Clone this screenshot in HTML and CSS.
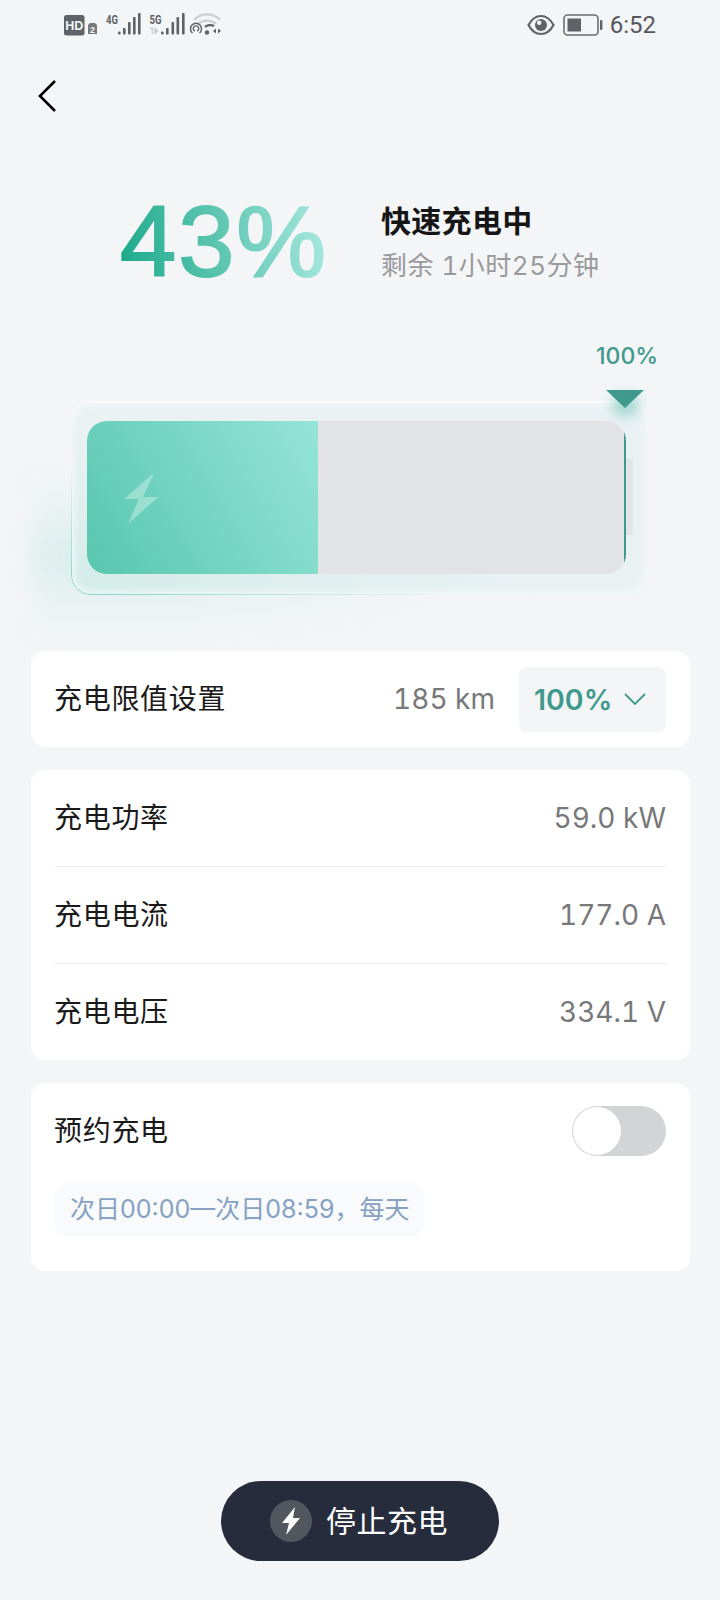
FILE: index.html
```html
<!DOCTYPE html>
<html lang="zh-CN">
<head>
<meta charset="utf-8">
<title>充电</title>
<link rel="stylesheet" href="styles.css">
</head>
<body>
<div class="page">
  <div class="status">
    <svg class="status-left" width="170" height="48" viewBox="60 0 170 48">
      <rect x="64" y="15" width="20.500" height="20.500" rx="2.500" fill="#5f6266"/>
      <text x="74.300" y="30" class="st-hd">HD</text>
      <path d="M90 23h5l2 2v9h-9v-9z" fill="#77797d"/>
      <text x="92.500" y="32.500" class="st-sim">2</text>
      <text x="106" y="23.500" class="st-g" textLength="12" lengthAdjust="spacingAndGlyphs">4G</text>
      <g fill="#5f6266">
        <rect x="118" y="31.500" width="2.600" height="3" rx="1"/>
        <rect x="123" y="28" width="2.600" height="6.500" rx=".8"/>
        <rect x="128" y="22" width="2.600" height="12.500" rx=".8"/>
        <rect x="133" y="17" width="2.600" height="17.500" rx=".8"/>
        <rect x="138" y="13" width="2.600" height="21.500" rx=".8"/>
      </g>
      <text x="149.500" y="23.500" class="st-g" textLength="12" lengthAdjust="spacingAndGlyphs">5G</text>
      <text x="149.500" y="34" class="st-one">1</text>
      <path d="M155 28l3 3-3 3zM155 28v6" fill="#c9cbce" stroke="#c9cbce"/>
      <g fill="#5f6266">
        <rect x="161" y="31.500" width="2.600" height="3" rx="1"/>
        <rect x="166" y="28" width="2.600" height="6.500" rx=".8"/>
        <rect x="171.500" y="22" width="2.600" height="12.500" rx=".8"/>
        <rect x="176.500" y="17" width="2.600" height="17.500" rx=".8"/>
        <rect x="182" y="13" width="2.600" height="21.500" rx=".8"/>
      </g>
      <path d="M194 20c7-7.500 19-7.500 26 0M198 24c5-4.500 13-4.500 18 0" fill="none" stroke="#cdcfd2" stroke-width="2.300"/>
      <path d="M192.500 33a5.500 5.500 0 1 1 7 0M194.800 31a2.700 2.700 0 1 1 2.400 0" fill="none" stroke="#5f6266" stroke-width="1.400"/>
      <path d="M205 27c2-2 6-2.500 9-1" fill="none" stroke="#5f6266" stroke-width="2.300"/>
      <circle cx="207" cy="32.500" r="2.200" fill="#5f6266"/>
      <path d="M213 31l3-2.500v5zM218 28.500l3 2.500-3 2.500z" fill="#5f6266"/>
    </svg>
    <div class="status-right">
      <svg width="28" height="22" viewBox="0 0 28 22" class="st-eye">
        <path d="M1.500 11C5 4.500 9 2 14 2s9 2.500 12.500 9C23 17.500 19 20 14 20S5 17.500 1.500 11z" fill="none" stroke="#5f6266" stroke-width="2.200"/>
        <circle cx="14" cy="11" r="6" fill="#5f6266"/>
        <circle cx="12.200" cy="8.800" r="2.300" fill="#f3f5f7"/>
      </svg>
      <svg width="40" height="22" viewBox="0 0 40 22" class="st-batt">
        <rect x="1" y="1" width="34" height="20" rx="3.500" fill="none" stroke="#6b6e72" stroke-width="1.600"/>
        <rect x="4.500" y="4.500" width="13.500" height="13" fill="#5f6266"/>
        <rect x="37" y="6" width="2.400" height="10" rx="1" fill="#5f6266"/>
      </svg>
      <span class="st-time">6:52</span>
    </div>
  </div>

  <div class="nav">
    <svg width="22" height="36" viewBox="0 0 22 36">
      <path d="M18 3L3 18l15 15" fill="none" stroke="#000" stroke-width="2.600"/>
    </svg>
  </div>

  <div class="hero">
    <div class="hero-num">43%</div>
    <div class="hero-text">
      <div class="hero-title">快速充电中</div>
      <div class="hero-sub">剩余 1小时25分钟</div>
    </div>
  </div>

  <div class="limit-label">100%</div>

  <div class="battery">
    <div class="glow"></div>
    <div class="shell">
      <div class="cell">
        <div class="fill">
          <svg class="bolt" width="34" height="52" viewBox="0 0 34 52">
            <path d="M30 1L0 27h15L4 52l30-27H19z" fill="#fff" fill-opacity=".33"/>
          </svg>
        </div>
        <div class="empty"></div>
      </div>
      <div class="cap"></div>
      <div class="marker-glow"></div>
      <div class="marker"></div>
    </div>
  </div>

  <div class="card card-limit">
    <span class="label">充电限值设置</span>
    <span class="value value-km">185 km</span>
    <div class="select">
      <span class="select-text">100%</span>
      <svg width="24" height="14" viewBox="0 0 24 14">
        <path d="M2 2l10 10L22 2" fill="none" stroke="#3f9a8d" stroke-width="1.800"/>
      </svg>
    </div>
  </div>

  <div class="card card-list">
    <div class="row"><span class="label">充电功率</span><span class="value">59.0 kW</span></div>
    <div class="row"><span class="label">充电电流</span><span class="value">177.0 A</span></div>
    <div class="row"><span class="label">充电电压</span><span class="value">334.1 V</span></div>
  </div>

  <div class="card card-plan">
    <div class="plan-head">
      <span class="label">预约充电</span>
      <div class="toggle"><div class="knob"></div></div>
    </div>
    <div class="chip">次日00:00—次日08:59，每天</div>
  </div>

  <div class="footer">
    <div class="stop">
      <span class="stop-icon">
        <svg width="18" height="28" viewBox="0 0 18 28">
          <path d="M13 0L0 16h7L4 28l14-17h-7z" fill="#fff"/>
        </svg>
      </span>
      <span class="stop-text">停止充电</span>
    </div>
  </div>
</div>
</body>
</html>
```
FILE: styles.css
```css
* { box-sizing: border-box; }
html, body { margin: 0; padding: 0; }
body {
  background: #f3f5f7;
  font-family: Inter, "Noto Sans CJK SC", sans-serif;
  color: #1a1a1a;
}
.page {
  width: 720px;
  height: 1600px;
  display: flex;
  flex-direction: column;
  overflow: hidden;
}

/* status bar */
.status {
  height: 48px;
  display: flex;
  justify-content: space-between;
  align-items: flex-start;
  padding: 0 64px 0 60px;
}
.status-left { display: block; }
.st-hd { font: 700 12.500px "Liberation Sans", sans-serif; fill: #f3f5f7; text-anchor: middle; }
.st-sim { font: 700 9px "Liberation Sans", sans-serif; fill: #f3f5f7; text-anchor: middle; }
.st-g { font: 700 12px "Roboto", sans-serif; fill: #5f6266; }
.st-one { font: 700 8.500px "Roboto", sans-serif; fill: #c9cbce; }
.status-right {
  display: flex;
  align-items: center;
  height: 48px;
  padding-top: 1px;
}
.st-eye { margin-right: 8px; }
.st-batt { margin-right: 7px; }
.st-time {
  font: 400 24px Roboto, sans-serif;
  color: #55585c;
}

/* back */
.nav {
  height: 68px;
  padding: 30px 0 0 37px;
}
.nav svg { display: block; }

/* hero */
.hero {
  display: flex;
  align-items: flex-start;
  padding: 70px 0 0 120px;
  height: 220px;
}
.hero-num {
  width: 261px;
  font-family: "Liberation Sans", sans-serif;
  font-size: 101px;
  line-height: 110px;
  font-weight: 400;
  letter-spacing: 2px;
  -webkit-text-stroke: 2px transparent;
  white-space: nowrap;
  background: linear-gradient(80deg, #1aa888 0%, #5cc5b0 38%, #a4e6dd 76%);
  -webkit-background-clip: text;
  background-clip: text;
  color: transparent;
}
.hero-text { padding-top: 15px; }
.hero-title {
  font-size: 30px;
  line-height: 40px;
  font-weight: 700;
  letter-spacing: .3px;
  color: #161616;
  white-space: nowrap;
}
.hero-sub {
  margin-top: 4px;
  font-size: 26px;
  line-height: 42px;
  letter-spacing: .5px;
  font-variant-numeric: tabular-nums;
  color: #9a9a9c;
  white-space: nowrap;
}

/* battery */
.limit-label {
  height: 30px;
  margin-top: 5px;
  padding-left: 596px;
  font-size: 23px;
  line-height: 30px;
  font-weight: 500;
  color: #3f9a8d;
}
.battery {
  position: relative;
  margin: 31px 0 0 71px;
  width: 577px;
  height: 193px;
}
.glow {
  position: absolute;
  left: -40px;
  top: 70px;
  width: 460px;
  height: 175px;
  background: radial-gradient(ellipse at 20% 48%, rgba(110, 210, 190, .24), rgba(110, 210, 190, .08) 30%, rgba(110, 210, 190, 0) 68%);
  filter: blur(10px);
}
.shell {
  position: relative;
  width: 577px;
  height: 193px;
  padding: 19px 0 0 16px;
  border-radius: 20px;
  background:
    linear-gradient(to top right, rgba(190, 232, 222, .55), rgba(190, 232, 222, 0) 42%),
    #e9f1f3;
  box-shadow: inset 0 0 8px 3px rgba(246, 249, 250, .9), 0 -1px 0 rgba(255, 255, 255, .8);
}
.shell::before {
  content: "";
  position: absolute;
  inset: 0;
  border: 1px solid #7fd4c2;
  border-radius: 20px;
  -webkit-mask-image: linear-gradient(to top right, #000 0%, transparent 34%);
  mask-image: linear-gradient(to top right, #000 0%, transparent 34%);
}
.cell {
  position: relative;
  display: flex;
  width: 539px;
  height: 153px;
  border-radius: 20px;
  overflow: hidden;
}
.cell::after {
  content: "";
  position: absolute;
  right: 0;
  top: 10px;
  bottom: 10px;
  width: 2px;
  background: #3f9a8d;
}
.fill {
  width: 231px;
  height: 153px;
  background: linear-gradient(60deg, #58c6ae 0%, #95e4d8 100%);
  padding: 51px 0 0 37px;
}
.bolt { display: block; }
.empty {
  width: 308px;
  height: 153px;
  background: #e2e3e5;
}
.cap {
  position: absolute;
  left: 555px;
  top: 57px;
  width: 7px;
  height: 76px;
  background: #e2e5e7;
  border-radius: 0 2px 2px 0;
}
.marker {
  position: absolute;
  left: 535px;
  top: -12px;
  width: 0;
  height: 0;
  border-left: 19.500px solid transparent;
  border-right: 19.500px solid transparent;
  border-top: 18px solid #3f9a8d;
}
.marker-glow {
  position: absolute;
  left: 540px;
  top: -8px;
  width: 29px;
  height: 22px;
  border-radius: 50%;
  background: rgba(95, 190, 175, .5);
  filter: blur(6px);
}

/* cards */
.card {
  background: #fff;
  width: 659px;
  margin-left: 31px;
  border-radius: 14px;
}
.label {
  margin-left: -1px;
  font-size: 28px;
  line-height: 40px;
  letter-spacing: .7px;
  color: #1a1a1a;
  white-space: nowrap;
}
.value {
  font-size: 28px;
  line-height: 40px;
  font-variant-numeric: tabular-nums;
  color: #77787a;
  white-space: nowrap;
}
.card-limit {
  display: flex;
  align-items: center;
  height: 96px;
  margin-top: 56px;
  padding: 0 24px;
}
.value-km { margin-left: auto; }
.select {
  display: flex;
  align-items: center;
  width: 147px;
  height: 65px;
  margin-left: 24px;
  padding-left: 15px;
  background: #f3f5f7;
  border-radius: 8px;
}
.select-text {
  font-size: 28.500px;
  font-weight: 600;
  color: #3f9a8d;
  margin-right: 11px;
}
.card-list {
  margin-top: 23px;
  height: 290px;
  padding: 0 24px;
}
.row {
  display: flex;
  align-items: center;
  justify-content: space-between;
  height: 97px;
  border-bottom: 1px solid #e6e8ea;
}
.row:last-child { border-bottom: 0; height: 96px; }
.card-plan {
  margin-top: 23px;
  height: 188px;
  padding: 23px 24px 0;
}
.plan-head {
  display: flex;
  align-items: center;
  justify-content: space-between;
  height: 50px;
}
.toggle {
  width: 94px;
  height: 50px;
  padding: 1px;
  border-radius: 25px;
  background: #d3d4d6;
}
.knob {
  width: 48px;
  height: 48px;
  border-radius: 50%;
  background: #fff;
}
.chip {
  display: inline-block;
  margin-top: 27px;
  height: 53px;
  padding: 0 15px;
  border-radius: 12px;
  background: #f8fafc;
  font-size: 25px;
  line-height: 53px;
  color: #86a1c2;
  white-space: nowrap;
}

/* footer */
.footer {
  margin-top: auto;
  padding-bottom: 39px;
  display: flex;
  justify-content: center;
}
.stop {
  display: flex;
  align-items: center;
  width: 278px;
  height: 80px;
  padding-left: 49px;
  border-radius: 40px;
  background: #262c3b;
}
.stop-icon {
  display: flex;
  align-items: center;
  justify-content: center;
  width: 42px;
  height: 42px;
  border-radius: 50%;
  background: #52565f;
}
.stop-icon svg { display: block; }
.stop-text {
  margin-left: 14px;
  padding-bottom: 4px;
  font-size: 30px;
  letter-spacing: .5px;
  color: #fff;
  white-space: nowrap;
}
```
